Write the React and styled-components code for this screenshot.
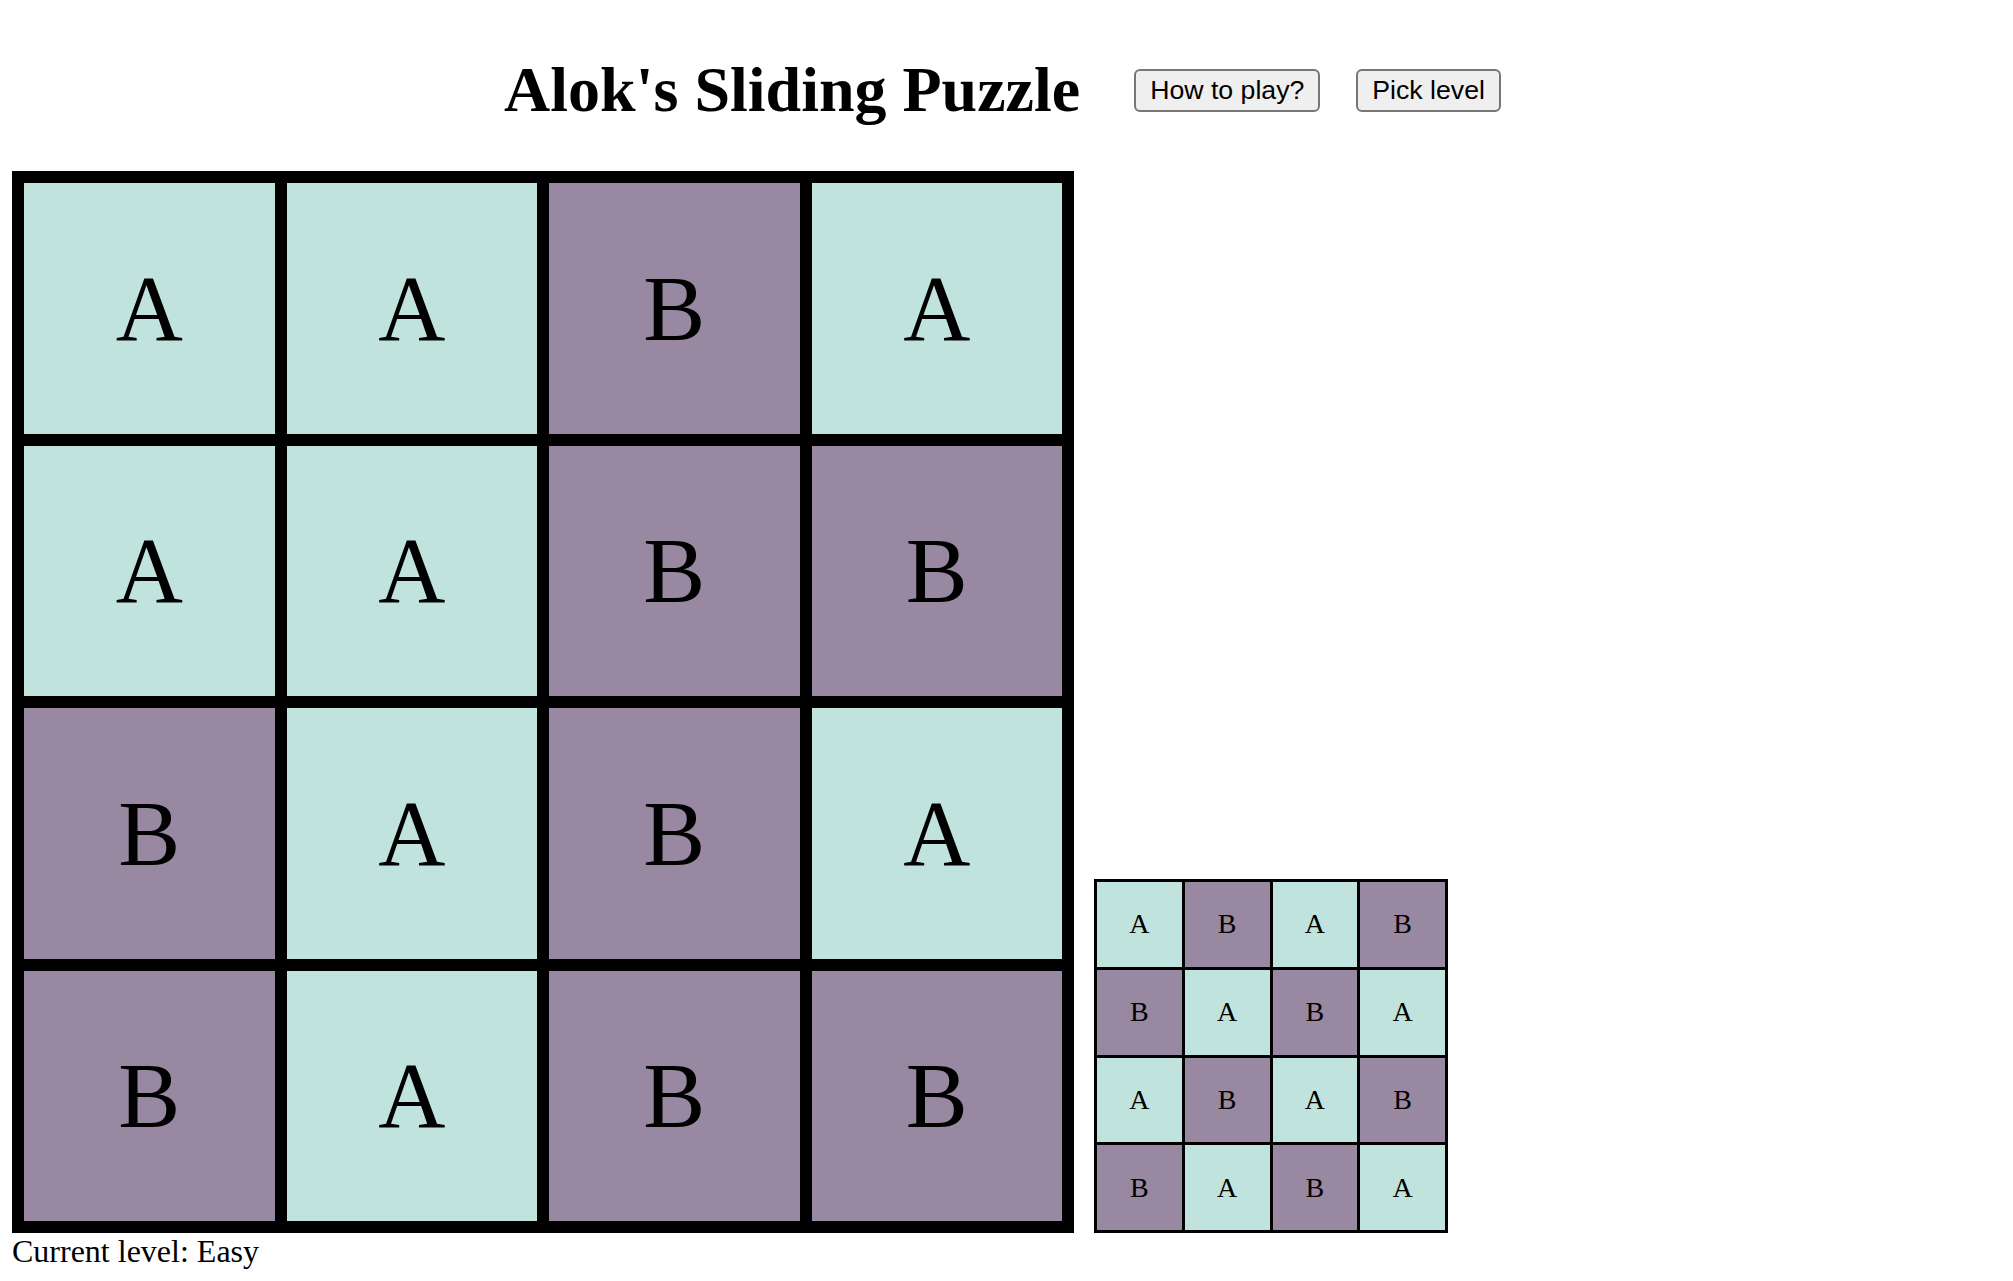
import React from 'react';
import styled, { createGlobalStyle } from 'styled-components';

const GlobalStyle = createGlobalStyle`
  html, body {
    margin: 0;
    padding: 0;
    background: #ffffff;
  }

  body {
    font-family: "Liberation Serif", "Times New Roman", serif;
    color: #000;
  }
`;

const TEAL = '#c0e3dd';
const PURPLE = '#9888a2';

const Page = styled.div`
  padding: 0 12px;
`;

const Header = styled.header`
  display: flex;
  align-items: center;
  justify-content: center;
  padding-right: 8px;
  margin: 53px 0 44px;
`;

const Title = styled.h1`
  margin: 0 54px 0 0;
  font-family: "Liberation Serif", "Times New Roman", serif;
  font-size: 64px;
  font-weight: 700;
  line-height: normal;
`;

const Buttons = styled.div`
  display: flex;
  gap: 36px;
`;

const Button = styled.button`
  font-family: "Liberation Sans", Arial, sans-serif;
  font-size: 26.67px;
  line-height: normal;
  color: #000;
  background: #efefef;
  border: 2px solid #767676;
  border-radius: 6px;
  padding: 4px 14px;
  cursor: pointer;
`;

const BoardRow = styled.div`
  display: flex;
  align-items: flex-end;
  gap: 20px;
`;

const Grid = styled.div`
  box-sizing: border-box;
  display: grid;
  grid-template-columns: repeat(4, 1fr);
  grid-template-rows: repeat(4, 1fr);
  width: ${(p) => p.$size}px;
  height: ${(p) => p.$size}px;
  padding: ${(p) => p.$line}px;
  gap: ${(p) => p.$line}px;
  background: #000;
`;

const Tile = styled.div`
  display: flex;
  align-items: center;
  justify-content: center;
  background: ${(p) => (p.$kind === 'A' ? TEAL : PURPLE)};
  font-family: "Liberation Serif", "Times New Roman", serif;
  font-size: ${(p) => p.$fontSize}px;
  line-height: 1;
  user-select: none;
`;

const Status = styled.div`
  font-size: 32px;
  line-height: normal;
`;

const board = [
  ['A', 'A', 'B', 'A'],
  ['A', 'A', 'B', 'B'],
  ['B', 'A', 'B', 'A'],
  ['B', 'A', 'B', 'B'],
];

const goal = [
  ['A', 'B', 'A', 'B'],
  ['B', 'A', 'B', 'A'],
  ['A', 'B', 'A', 'B'],
  ['B', 'A', 'B', 'A'],
];

const Board = ({ cells, size, line, fontSize }) => (
  <Grid $size={size} $line={line}>
    {cells.flat().map((kind, i) => (
      <Tile key={i} $kind={kind} $fontSize={fontSize}>
        {kind}
      </Tile>
    ))}
  </Grid>
);

export default function App() {
  return (
    <>
      <GlobalStyle />
      <Page>
        <Header>
          <Title>Alok's Sliding Puzzle</Title>
          <Buttons>
            <Button>How to play?</Button>
            <Button>Pick level</Button>
          </Buttons>
        </Header>

        <BoardRow>
          <Board cells={board} size={1062} line={12} fontSize={93} />
          <Board cells={goal} size={354} line={3} fontSize={28} />
        </BoardRow>

        <Status>Current level: Easy</Status>
      </Page>
    </>
  );
}
